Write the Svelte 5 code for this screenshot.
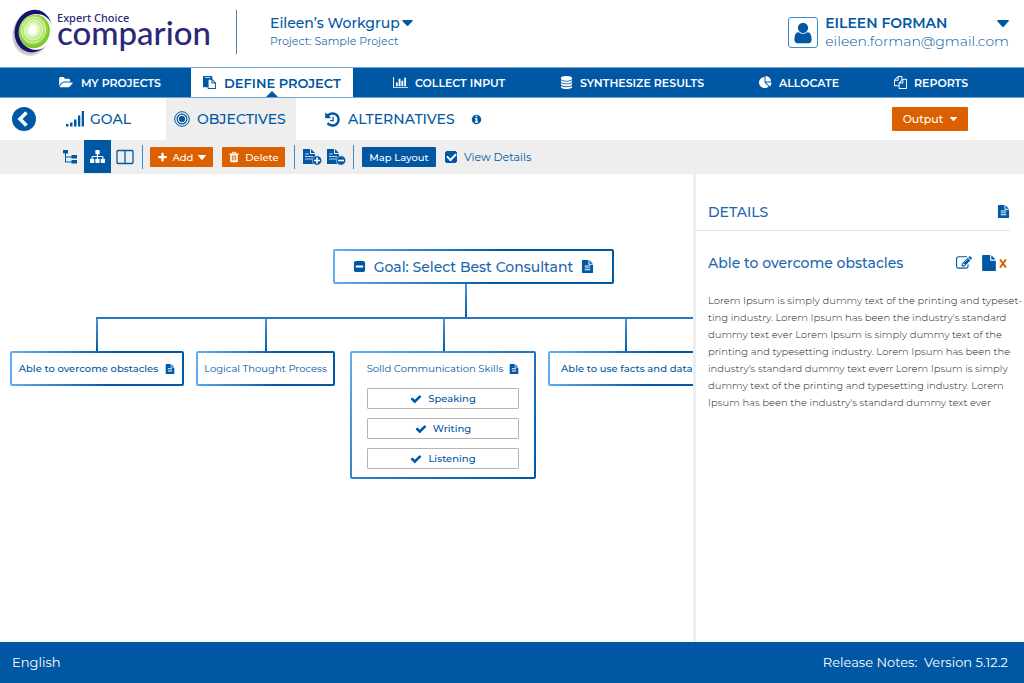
<script>
  const paths = {
    folder: 'M1879 952q0 31-31 66l-336 396q-43 51-120.500 86.500t-143.500 35.500h-1088q-34 0-60.500-13t-26.500-43q0-31 31-66l336-396q43-51 120.500-86.500t143.500-35.500h1088q34 0 60.500 13t26.500 43zm-343-344v160h-832q-94 0-197 47.500t-164 119.500l-337 396-5 6q0-4-.5-12.500t-.5-12.500v-960q0-92 66-158t158-66h320q92 0 158 66t66 158v32h544q92 0 158 66t66 158z',
    paste: 'M768 1664h896v-640h-416q-40 0-68-28t-28-68v-416h-384v1152zm256-1440v-64q0-13-9.500-22.500t-22.500-9.500h-704q-13 0-22.500 9.500t-9.500 22.500v64q0 13 9.500 22.500t22.500 9.500h704q13 0 22.500-9.500t9.500-22.500zm256 672h299l-299-299v299zm512 128v672q0 40-28 68t-68 28h-960q-40 0-68-28t-28-68v-160h-544q-40 0-68-28t-28-68v-1344q0-40 28-68t68-28h1088q40 0 68 28t28 68v328q21 13 36 28l408 408q28 28 48 76t20 88z',
    chart: 'M640 896v512h-256v-512h256zm384-512v1024h-256v-1024h256zm1024 1152v128h-2048v-1536h128v1408h1920zm-640-896v768h-256v-768h256zm384-384v1152h-256v-1152h256z',
    database: 'M896 768q237 0 443-43t325-127v170q0 69-103 128t-280 93.500-385 34.500-385-34.500-280-93.500-103-128v-170q119 84 325 127t443 43zm0 768q237 0 443-43t325-127v170q0 69-103 128t-280 93.500-385 34.500-385-34.500-280-93.500-103-128v-170q119 84 325 127t443 43zm0-384q237 0 443-43t325-127v170q0 69-103 128t-280 93.500-385 34.500-385-34.500-280-93.500-103-128v-170q119 84 325 127t443 43zm0-1152q208 0 385 34.500t280 93.500 103 128v128q0 69-103 128t-280 93.500-385 34.500-385-34.500-280-93.500-103-128v-128q0-69 103-128t280-93.500 385-34.500z',
    pie: 'M768 890l546 546q-106 108-247.500 168t-298.500 60q-209 0-385.500-103t-279.500-279.500-103-385.500 103-385.500 279.500-279.500 385.500-103v762zm187 6h773q0 157-60 298.500t-168 247.500zm709-128h-768v-768q209 0 385.500 103t279.500 279.500 103 385.500z',
    copy: 'M1696 384q40 0 68 28t28 68v1216q0 40-28 68t-68 28h-960q-40 0-68-28t-28-68v-288h-544q-40 0-68-28t-28-68v-672q0-40 20-88t48-76l408-408q28-28 76-48t88-20h416q40 0 68 28t28 68v328q68-40 128-40h416zm-544 213l-299 299h299v-299zm-640-384l-299 299h299v-299zm196 647l316-316v-416h-384v416q0 40-28 68t-68 28h-416v640h512v-256q0-40 20-88t48-76zm956 804v-1152h-384v416q0 40-28 68t-68 28h-416v640h896z',
    history: 'M1664 896q0 156-61 298t-164 245-245 164-298 61q-172 0-327-72.500t-264-204.500q-7-10-6.500-22.500t8.500-20.500l137-138q10-9 25-9 16 2 23 12 73 95 179 147t225 52q104 0 198.500-40.500t163.500-109.500 109.500-163.500 40.500-198.500-40.500-198.500-109.500-163.500-163.500-109.500-198.500-40.500q-98 0-188 35.500t-160 101.500l137 138q31 30 14 69-17 40-59 40h-448q-26 0-45-19t-19-45v-448q0-42 40-59 39-17 69 14l130 129q107-101 244.500-156.500t284.500-55.500q156 0 298 61t245 164 164 245 61 298zm-640-288v448q0 14-9 23t-23 9h-320q-14 0-23-9t-9-23v-64q0-14 9-23t23-9h224v-352q0-14 9-23t23-9h64q14 0 23 9t9 23z',
    info: 'M1152 1376v-160q0-14-9-23t-23-9h-96v-512q0-14-9-23t-23-9h-320q-14 0-23 9t-9 23v160q0 14 9 23t23 9h96v320h-96q-14 0-23 9t-9 23v160q0 14 9 23t23 9h448q14 0 23-9t9-23zm-128-896v-160q0-14-9-23t-23-9h-192q-14 0-23 9t-9 23v160q0 14 9 23t23 9h192q14 0 23-9t9-23zm640 416q0 209-103 385.500t-279.500 279.500-385.500 103-385.500-103-279.500-279.500-103-385.500 103-385.500 279.500-279.500 385.500-103 385.500 103 279.500 279.500 103 385.500z',
    sitemap: 'M1792 1248v320q0 40-28 68t-68 28h-320q-40 0-68-28t-28-68v-320q0-40 28-68t68-28h96v-192h-512v192h96q40 0 68 28t28 68v320q0 40-28 68t-68 28h-320q-40 0-68-28t-28-68v-320q0-40 28-68t68-28h96v-192h-512v192h96q40 0 68 28t28 68v320q0 40-28 68t-68 28h-320q-40 0-68-28t-28-68v-320q0-40 28-68t68-28h96v-192q0-52 38-90t90-38h512v-192h-96q-40 0-68-28t-28-68v-320q0-40 28-68t68-28h320q40 0 68 28t28 68v320q0 40-28 68t-68 28h-96v192h512q52 0 90 38t38 90v192h96q40 0 68 28t28 68z',
    plus: 'M1600 736v192q0 40-28 68t-68 28h-416v416q0 40-28 68t-68 28h-192q-40 0-68-28t-28-68v-416h-416q-40 0-68-28t-28-68v-192q0-40 28-68t68-28h416v-416q0-40 28-68t68-28h192q40 0 68 28t28 68v416h416q40 0 68 28t28 68z',
    trash: 'M704 1376v-704q0-14-9-23t-23-9h-64q-14 0-23 9t-9 23v704q0 14 9 23t23 9h64q14 0 23-9t9-23zm256 0v-704q0-14-9-23t-23-9h-64q-14 0-23 9t-9 23v704q0 14 9 23t23 9h64q14 0 23-9t9-23zm256 0v-704q0-14-9-23t-23-9h-64q-14 0-23 9t-9 23v704q0 14 9 23t23 9h64q14 0 23-9t9-23zm-544-992h448l-48-117q-7-9-17-11h-317q-10 2-17 11zm928 32v64q0 14-9 23t-23 9h-96v948q0 83-47 143.500t-113 60.500h-832q-66 0-113-58.500t-47-141.500v-952h-96q-14 0-23-9t-9-23v-64q0-14 9-23t23-9h309l70-167q15-37 54-63t79-26h320q40 0 79 26t54 63l70 167h309q14 0 23 9t9 23z',
    edit: 'M888 1184l116-116-152-152-116 116v56h96v96h56zm440-720q-16-16-33 1l-350 350q-17 17-1 33t33-1l350-350q17-17 1-33zm80 594v190q0 119-84.500 203.500t-203.500 84.500h-832q-119 0-203.500-84.500t-84.500-203.500v-832q0-119 84.500-203.500t203.500-84.500h832q63 0 117 25 15 7 18 23 3 17-9 29l-49 49q-14 14-32 8-23-6-45-6h-832q-66 0-113 47t-47 113v832q0 66 47 113t113 47h832q66 0 113-47t47-113v-126q0-13 9-22l64-64q15-15 35-7t20 29zm-96-738l288 288-672 672h-288v-288zm444 132l-92 92-288-288 92-92q28-28 68-28t68 28l152 152q28 28 28 68t-28 68z',
    file: 'M1152 512v-472q22 14 36 28l408 408q14 14 28 36h-472zm-128 32q0 40 28 68t68 28h544v1056q0 40-28 68t-68 28h-1344q-40 0-68-28t-28-68v-1600q0-40 28-68t68-28h800v544z',
    fileText: 'M1596 476q14 14 28 36h-472v-472q22 14 36 28zm-476 164h544v1056q0 40-28 68t-68 28h-1344q-40 0-68-28t-28-68v-1600q0-40 28-68t68-28h800v544q0 40 28 68t68 28zm160 736v-64q0-14-9-23t-23-9h-704q-14 0-23 9t-9 23v64q0 14 9 23t23 9h704q14 0 23-9t9-23zm0-256v-64q0-14-9-23t-23-9h-704q-14 0-23 9t-9 23v64q0 14 9 23t23 9h704q14 0 23-9t9-23zm0-256v-64q0-14-9-23t-23-9h-704q-14 0-23 9t-9 23v64q0 14 9 23t23 9h704q14 0 23-9t9-23z',
    minus: 'M1408 960v-128q0-26-19-45t-45-19h-896q-26 0-45 19t-19 45v128q0 26 19 45t45 19h896q26 0 45-19t19-45zm256-544v960q0 119-84.500 203.500t-203.500 84.500h-960q-119 0-203.500-84.500t-84.500-203.500v-960q0-119 84.500-203.500t203.500-84.500h960q119 0 203.500 84.500t84.500 203.500z',
    check: 'M1671 566q0 40-28 68l-724 724-136 136q-28 28-68 28t-68-28l-136-136-362-362q-28-28-28-68t28-68l136-136q28-28 68-28t68 28l294 295 656-657q28-28 68-28t68 28l136 136q28 28 28 68z',
    user: 'M1536 1399q0 109-62.500 187t-150.500 78h-854q-88 0-150.500-78t-62.500-187q0-85 8.500-160.500t31.500-152 58.500-131 94-89 134.500-34.500q131 128 313 128t313-128q76 0 134.500 34.500t94 89 58.500 131 31.500 152 8.500 160.500zm-256-887q0 159-112.500 271.500t-271.500 112.500-271.500-112.500-112.500-271.500 112.500-271.500 271.500-112.500 271.500 112.500 112.500 271.500z'
  };

  const tabs = [
    { label: 'MY PROJECTS', icon: 'folder' },
    { label: 'DEFINE PROJECT', icon: 'paste', active: true },
    { label: 'COLLECT INPUT', icon: 'chart' },
    { label: 'SYNTHESIZE RESULTS', icon: 'database' },
    { label: 'ALLOCATE', icon: 'pie' },
    { label: 'REPORTS', icon: 'copy' }
  ];

  const skills = ['Speaking', 'Writing', 'Listening'];

  const details = [
    'Lorem Ipsum is simply dummy text of the printing and typeset-',
    "ting industry. Lorem Ipsum has been the industry's standard",
    'dummy text ever Lorem Ipsum is simply dummy text of the',
    'printing and typesetting industry. Lorem Ipsum has been the',
    "industry's standard dummy text everr Lorem Ipsum is simply",
    'dummy text of the printing and typesetting industry. Lorem',
    "Ipsum has been the industry's standard dummy text ever"
  ].join('\n');

  let viewDetails = $state(true);
</script>

{#snippet icon(name, size)}
  {@const wide = name === 'chart' || name === 'folder'}
  <svg class="icon" width={wide ? size + 2 : size} height={size} viewBox={wide ? '0 0 2048 1792' : '0 0 1792 1792'} aria-hidden="true">
    <path d={paths[name]} />
  </svg>
{/snippet}

{#snippet caret(w, h)}
  <svg class="icon" width={w} height={h} viewBox="0 0 12 7" preserveAspectRatio="none" aria-hidden="true">
    <path d="M1 0h10q1.500 0 .6 1.200L7 6.400q-1 1-2 0L.4 1.200Q-.5 0 1 0z" />
  </svg>
{/snippet}

{#snippet docBadge(minus)}
  <svg class="icon" width="20" height="18" viewBox="0 0 20 18" aria-hidden="true">
    <path d="M1 1h7v5h5v10H1zM9 1l4 4h-4z" />
    <path d="M3 6h4M3 8.500h8M3 11h7" stroke="#b9d3ea" fill="none" />
    <circle cx="15" cy="12.500" r="4.700" stroke="#eee" stroke-width=".6" />
    <path d={minus ? 'M12 12.500h6' : 'M12 12.500h6M15 9.500v6'} stroke="#fff" stroke-width="1.600" fill="none" />
  </svg>
{/snippet}

<div class="app">
  <header class="top">
    <div class="logo">
      <svg width="46" height="50" viewBox="0 0 46 50" aria-hidden="true">
        <defs>
          <radialGradient id="lime" cx="45%" cy="46%">
            <stop offset="0" stop-color="#fff" />
            <stop offset=".25" stop-color="#e8f9cf" />
            <stop offset=".7" stop-color="#b2e46c" />
            <stop offset="1" stop-color="#7cc926" />
          </radialGradient>
        </defs>
        <g transform="rotate(16 22 25)">
          <ellipse cx="21" cy="27" rx="19" ry="22.500" fill="#ddd" />
          <ellipse cx="21" cy="26" rx="18.500" ry="22" fill="#c2c2c6" />
          <ellipse cx="22" cy="24" rx="18.500" ry="21.500" fill="#15136f" />
          <ellipse cx="25" cy="24" rx="17" ry="18" fill="#fff" />
          <ellipse cx="23" cy="24" rx="15.500" ry="17" fill="url(#lime)" />
          <g fill="none" stroke="#f0fbdc" stroke-width=".7">
            <ellipse cx="22" cy="23" rx="12" ry="13" />
            <ellipse cx="22" cy="23" rx="9" ry="10" />
            <ellipse cx="21" cy="23" rx="6" ry="7" />
          </g>
          <ellipse cx="21" cy="23" rx="4" ry="5" fill="#fff" />
        </g>
      </svg>
      <div class="brand"><span>Expert Choice</span><strong>comparion</strong></div>
    </div>
    <div class="workgroup">
      <button class="plain name">Eileen’s Workgrup {@render caret(11, 6)}</button>
      <div class="sub">Project: Sample Project</div>
    </div>
    <div class="account">
      <span class="avatar">{@render icon('user', 24)}</span>
      <div>
        <button class="plain name wide">EILEEN FORMAN {@render caret(12, 7)}</button>
        <div class="mail">eileen.forman@gmail.com</div>
      </div>
    </div>
  </header>

  <nav class="tabs">
    {#each tabs as tab}
      <a href="#top" class:active={tab.active}>{@render icon(tab.icon, 13)}<span>{tab.label}</span></a>
    {/each}
  </nav>

  <div class="steps">
    <button class="plain back" aria-label="Back">
      <svg width="24" height="24" viewBox="0 0 24 24" aria-hidden="true">
        <circle cx="12" cy="12" r="12" fill="#0057a3" />
        <path d="M14.500 5.500L8 12l6.500 6.500" fill="none" stroke="#fff" stroke-width="3.600" />
      </svg>
    </button>
    <a class="goal" href="#goal">
      <svg class="icon" width="18" height="16" viewBox="0 0 18 16" aria-hidden="true">
        <path d="M0 13h2.500v2.500H0zM4 11.500h2.500v4H4zM8 8.500h2.500v7H8zM12 4.500h2.300v11H12zM15.700 0H18v15.500h-2.300z" />
      </svg>
      GOAL
    </a>
    <a class="objectives" href="#objectives">
      <svg width="16" height="16" viewBox="0 0 16 16" fill="none" stroke="#0057a3" aria-hidden="true">
        <circle cx="8" cy="8" r="7.300" />
        <circle cx="8" cy="8" r="4.900" stroke-width="1.200" />
        <circle cx="8" cy="8" r="2.700" fill="#0057a3" />
      </svg>
      OBJECTIVES
    </a>
    <a class="alternatives" href="#alternatives">{@render icon('history', 17)} ALTERNATIVES</a>
    <span class="info">{@render icon('info', 11)}</span>
    <button class="orange output">Output {@render caret(7, 4)}</button>
  </div>

  <div class="toolbar">
    <div class="views">
      <button class="plain view" aria-label="Tree view">
        <svg class="icon" width="14" height="14" viewBox="0 0 14 14" aria-hidden="true">
          <path d="M0 0h5v3.500H3v3h5.500V5H14v3.500H8.500v-1H3v4h5.500V10H14v3.500H8.500v-1H2v-9H0z" />
        </svg>
      </button>
      <button class="plain view on" aria-label="Hierarchy view">{@render icon('sitemap', 15)}</button>
      <button class="plain view" aria-label="Split view">
        <svg width="18" height="16" viewBox="0 0 18 16" fill="none" stroke="#0057a3" stroke-width="1.300" aria-hidden="true">
          <rect x="1" y="1.500" width="16" height="13" rx="1" />
          <path d="M9 2v12" />
        </svg>
      </button>
    </div>
    <div class="group edit">
      <button class="orange">{@render icon('plus', 11)} Add {@render caret(8, 5)}</button>
      <button class="orange">{@render icon('trash', 12)} Delete</button>
    </div>
    <div class="group docs">
      <button class="plain" aria-label="Add note">{@render docBadge(false)}</button>
      <button class="plain" aria-label="Remove note">{@render docBadge(true)}</button>
    </div>
    <div class="group map">
      <button class="blue">Map Layout</button>
      <label><input type="checkbox" bind:checked={viewDetails} /> View Details</label>
    </div>
  </div>

  <main>
    <section class="canvas">
      <svg class="lines" width="760" height="320" aria-hidden="true">
        <defs>
          <linearGradient id="drop" x1="0" y1="0" x2="0" y2="1">
            <stop offset="0" stop-color="#4b9be3" />
            <stop offset="1" stop-color="#0057a3" />
          </linearGradient>
        </defs>
        <g fill="url(#drop)">
          <rect x="465" y="109" width="2" height="34" />
          <rect x="96" y="143" width="2" height="35" />
          <rect x="265" y="143" width="2" height="35" />
          <rect x="443" y="143" width="2" height="35" />
          <rect x="625" y="143" width="2" height="35" />
        </g>
        <rect x="96" y="143" width="664" height="2" fill="#2a78c0" />
      </svg>
      <div class="node root">{@render icon('minus', 13)}<span>Goal: Select Best Consultant</span>{@render icon('fileText', 13)}</div>
      <div class="node first"><span>Able to overcome obstacles</span>{@render icon('fileText', 10)}</div>
      <div class="node second"><span>Logical Thought Process</span></div>
      <div class="node third">
        <div class="heading"><span>Solld Communication Skills</span>{@render icon('fileText', 10)}</div>
        <ul>
          {#each skills as skill}
            <li>{@render icon('check', 12)}<span>{skill}</span></li>
          {/each}
        </ul>
      </div>
      <div class="node fourth"><span>Able to use facts and data</span></div>
    </section>

    {#if viewDetails}
      <aside>
        <div class="details-head"><h2>DETAILS</h2>{@render icon('fileText', 13)}</div>
        <div class="details-title">
          <h3>Able to overcome obstacles</h3>
          <button class="plain" aria-label="Edit">{@render icon('edit', 16)}</button>
          <button class="plain file" aria-label="File">{@render icon('file', 16)}</button>
          <button class="plain close" aria-label="Remove">
            <svg width="8" height="9" viewBox="0 0 8 9" aria-hidden="true"><path d="M1 .5l6 8M7 .5L1 8.500" stroke="#dc6000" stroke-width="2" /></svg>
          </button>
        </div>
        <p>{details}</p>
      </aside>
    {/if}
  </main>

  <footer>
    <span>English</span>
    <span>Release Notes:&nbsp; Version 5.12.2</span>
  </footer>
</div>

<style>
  :global(body) {
    margin: 0;
    background: #fff;
  }
  .app {
    --blue: #0057a3;
    --soft-blue: #1c66ad;
    --orange: #dc6000;
    display: flex;
    flex-direction: column;
    min-height: 100vh;
    color: var(--blue);
    font-family: Montserrat, Inter, sans-serif;
    font-size: 12px;
  }
  .app * {
    box-sizing: border-box;
  }
  svg {
    display: block;
    flex: none;
  }
  .icon {
    fill: currentColor;
  }
  a {
    color: inherit;
    text-decoration: none;
  }
  button {
    display: flex;
    align-items: center;
    border: 0;
    margin: 0;
    padding: 0;
    font: inherit;
    color: inherit;
    cursor: pointer;
    white-space: nowrap;
  }
  .plain {
    background: none;
  }
  .orange,
  .blue {
    color: #fff;
    background: var(--orange);
    border-radius: 1px;
    font-weight: 500;
  }
  .blue {
    background: var(--blue);
  }

  .top {
    display: flex;
    height: 67px;
    padding: 0 15px 0 11px;
  }
  .logo {
    display: flex;
    align-items: flex-start;
    width: 225px;
    padding-top: 7px;
  }
  .brand {
    display: flex;
    flex-direction: column;
    padding-top: 5px;
    color: #2b2878;
    font-family: "Noto Sans", sans-serif;
  }
  .brand span {
    font-size: 11px;
    line-height: 12px;
    font-weight: 500;
  }
  .brand strong {
    font-family: Lato, sans-serif;
    font-size: 33px;
    line-height: 16px;
    font-weight: 500;
  }
  .workgroup {
    align-self: flex-start;
    height: 44px;
    margin-top: 10px;
    padding: 3px 0 0 33px;
    border-left: 1px solid #3f8bc9;
  }
  .name {
    gap: 2px;
    font-size: 14px;
    line-height: 20px;
    font-weight: 500;
  }
  .sub {
    font-size: 11px;
    line-height: 17px;
    color: #2a6fb3;
  }
  .account {
    display: flex;
    align-items: flex-start;
    gap: 7px;
    margin-left: auto;
    padding-top: 13px;
  }
  .avatar {
    display: grid;
    place-items: center;
    width: 30px;
    height: 31px;
    margin-top: 4px;
    border: 1px solid #3f8bc9;
    border-radius: 3px;
  }
  .wide {
    width: 100%;
    justify-content: space-between;
    font-weight: 600;
  }
  .mail {
    font-size: 14px;
    line-height: 16px;
    font-weight: 300;
  }

  .tabs {
    display: grid;
    grid-template-columns: 132fr 202fr 167fr 199fr 135fr 130fr;
    height: 31px;
    padding-left: 59px;
    color: #fff;
    background: var(--blue);
    border-top: 1px solid #6ba6d6;
    border-bottom: 1px solid #6ba6d6;
    font-size: 11px;
    font-weight: 600;
  }
  .tabs a {
    display: flex;
    align-items: center;
    gap: 7px;
    white-space: nowrap;
  }
  .tabs .active {
    position: relative;
    gap: 8px;
    justify-self: start;
    padding: 0 12px;
    color: var(--blue);
    background: #fff;
    font-size: 13px;
  }
  .tabs .active::after {
    content: '';
    position: absolute;
    left: 50%;
    bottom: 0;
    margin-left: -6px;
    border: 6px solid transparent;
    border-top: 0;
    border-bottom-color: var(--blue);
  }

  .steps {
    display: flex;
    align-items: center;
    height: 42px;
    padding: 0 56px 0 12px;
    font-size: 14px;
    font-weight: 500;
  }
  .steps a {
    display: flex;
    align-items: center;
    gap: 7px;
    height: 100%;
  }
  .steps .goal {
    width: 100px;
    margin-left: 30px;
    gap: 6px;
  }
  .steps .objectives {
    width: 130px;
    padding-left: 8px;
    background: #eee;
  }
  .steps .alternatives {
    margin-left: 28px;
  }
  .info {
    margin-left: 16px;
  }
  .output {
    justify-content: center;
    gap: 7px;
    width: 76px;
    height: 24px;
    margin-left: auto;
    font-size: 11px;
  }

  .toolbar {
    display: flex;
    align-items: center;
    height: 34px;
    padding-left: 56px;
    background: #eee;
    font-size: 10px;
  }
  .views {
    display: flex;
    height: 100%;
  }
  .view {
    justify-content: center;
    width: 28px;
    height: 33px;
  }
  .view.on {
    width: 27px;
    color: #fff;
    background: var(--blue);
  }
  .group {
    display: flex;
    align-items: center;
    height: 24px;
    padding-left: 8px;
    border-left: 1px solid #3f8bc9;
  }
  .edit {
    gap: 9px;
    margin-left: 3px;
    padding-left: 7px;
    padding-right: 9px;
  }
  .edit button {
    justify-content: center;
    gap: 5px;
    width: 63px;
    height: 20px;
  }
  .docs {
    gap: 4px;
    padding-left: 7px;
    padding-right: 7px;
  }
  .blue {
    justify-content: center;
    width: 74px;
    height: 20px;
  }
  label {
    display: flex;
    align-items: center;
    gap: 7px;
    margin-left: 9px;
    font-size: 11px;
  }
  input {
    appearance: none;
    display: grid;
    place-items: center;
    width: 12px;
    height: 12px;
    margin: 0;
    border: 1px solid var(--blue);
    border-radius: 2px;
  }
  input:checked {
    background: var(--blue);
  }
  input:checked::before {
    content: '';
    width: 7px;
    height: 4px;
    margin-bottom: 2px;
    border: solid #fff;
    border-width: 0 0 2px 2px;
    transform: rotate(-45deg);
  }

  main {
    flex: 1;
    display: flex;
  }
  .canvas {
    position: relative;
    flex: 1;
    min-width: 0;
    overflow: hidden;
  }
  .lines {
    position: absolute;
    left: 0;
    top: 0;
  }
  .node {
    position: absolute;
    top: 177px;
    display: flex;
    align-items: center;
    justify-content: center;
    height: 35px;
    border: 2px solid transparent;
    border-radius: 2px;
    background:
      linear-gradient(#fff, #fff) padding-box,
      linear-gradient(100deg, #63aff5, #0057a3 60%, #0057a3) border-box;
    font-size: 10px;
    white-space: nowrap;
  }
  .root {
    left: 333px;
    top: 75px;
    width: 281px;
    gap: 8px;
    font-size: 14px;
    font-weight: 500;
  }
  .root span,
  h2,
  h3 {
    color: var(--soft-blue);
  }
  .first {
    left: 10px;
    width: 174px;
    gap: 7px;
    font-weight: 500;
  }
  .second {
    left: 196px;
    width: 139px;
  }
  .third {
    left: 350px;
    width: 186px;
    height: 128px;
    flex-direction: column;
    justify-content: flex-start;
    padding: 9px 15px;
    background:
      linear-gradient(#fff, #fff) padding-box,
      linear-gradient(135deg, #63aff5, #2a78c0 50%, #0057a3) border-box;
  }
  .fourth {
    left: 548px;
    width: 174px;
    justify-content: flex-start;
    padding-left: 11px;
    font-weight: 500;
  }
  .heading {
    display: flex;
    align-items: center;
    gap: 6px;
    line-height: 14px;
  }
  ul {
    display: flex;
    flex-direction: column;
    gap: 9px;
    width: 100%;
    margin: 12px 0 0;
    padding: 0;
    list-style: none;
  }
  li {
    display: flex;
    align-items: center;
    justify-content: center;
    gap: 6px;
    height: 21px;
    border: 1px solid #b5b5b5;
    border-radius: 1px;
    font-weight: 500;
  }

  aside {
    width: 331px;
    border-left: 3px solid #eee;
  }
  .details-head {
    display: flex;
    align-items: center;
    justify-content: space-between;
    height: 57px;
    margin-right: 14px;
    padding: 19px 0 0 12px;
    border-bottom: 1px solid #e2e2e2;
  }
  h2,
  h3 {
    margin: 0;
    font-size: 14px;
    font-weight: 500;
  }
  .details-title {
    display: flex;
    align-items: center;
    padding: 22px 17px 0 12px;
  }
  h3 {
    flex: 1;
    line-height: 20px;
  }
  .file {
    margin-left: 9px;
  }
  .close {
    margin-left: 2px;
  }
  p {
    margin: 19px 0 0;
    padding-left: 12px;
    color: #222;
    font-size: 10px;
    line-height: 17px;
    font-weight: 300;
    white-space: pre-line;
  }

  footer {
    display: flex;
    align-items: center;
    justify-content: space-between;
    height: 41px;
    padding: 0 16px 2px 12px;
    color: #fff;
    background: var(--blue);
    font-size: 13px;
    font-weight: 400;
  }
</style>
